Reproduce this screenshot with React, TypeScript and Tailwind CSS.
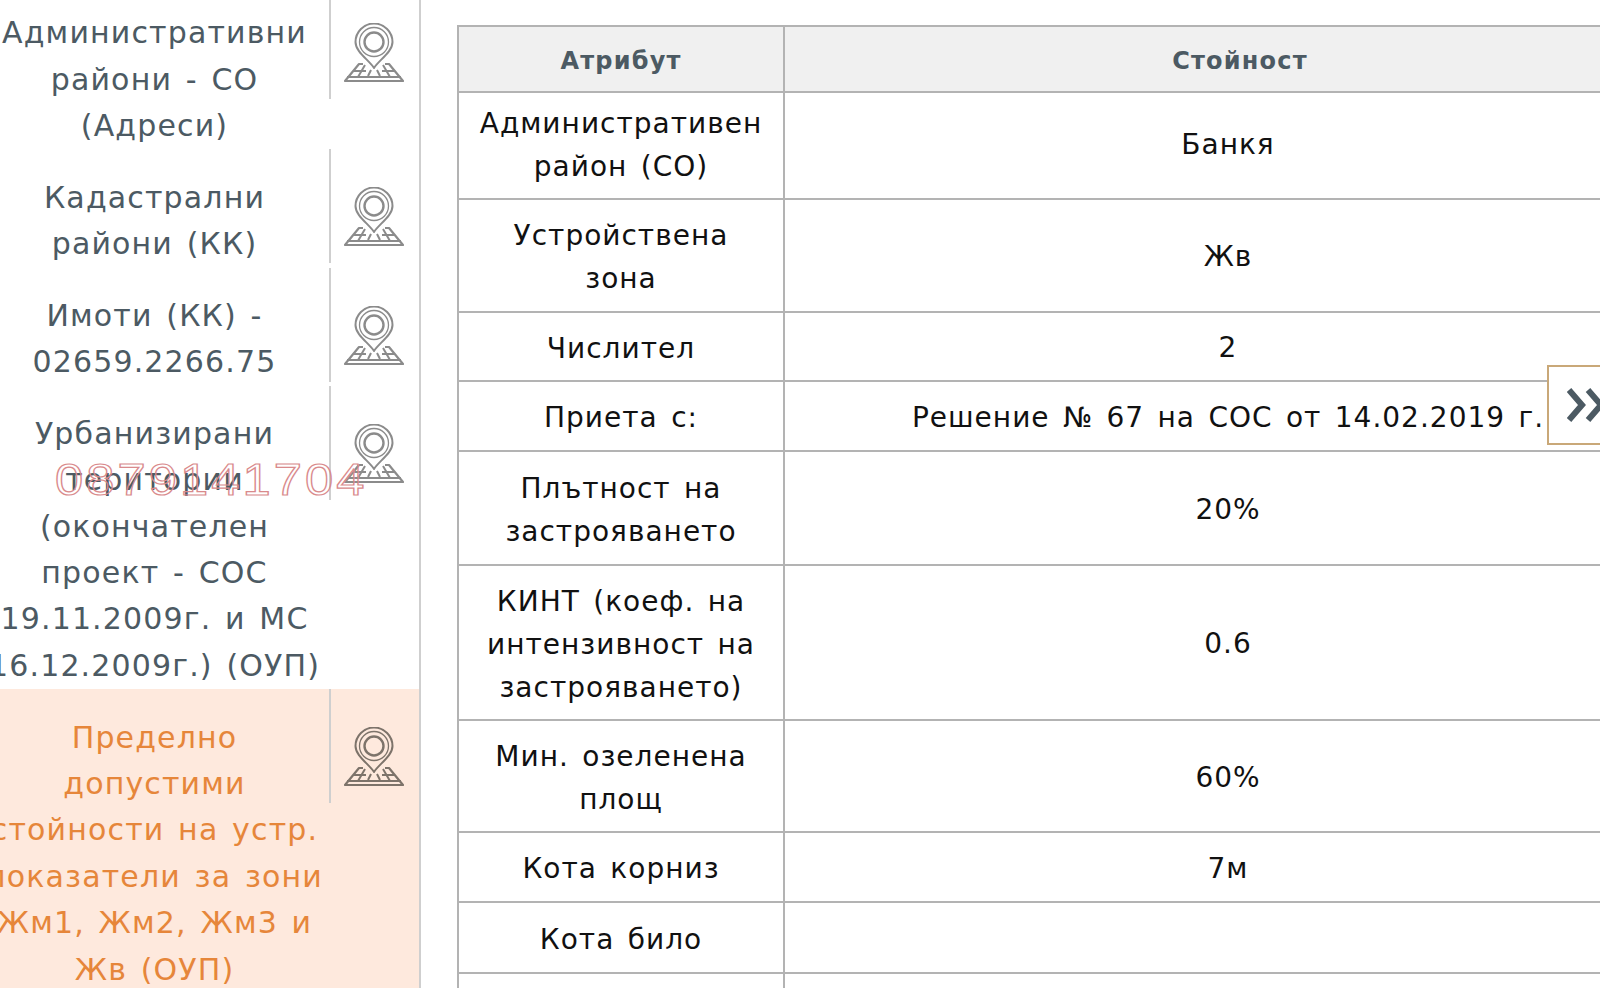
const sideItems = [
  { label: "Административни районите", lines: ["Административни", "райони - СО", "(Адреси)"] },
  { label: "Кадастрални", lines: ["Кадастрални", "райони (КК)"] },
  { label: "Имоти", lines: ["Имоти (КК) -", "02659.2266.75"] },
  {
    label: "Урбанизирани",
    lines: ["Урбанизирани", "територии", "(окончателен", "проект - СОС", "19.11.2009г. и МС", "16.12.2009г.) (ОУП)"],
  },
  {
    label: "Пределно",
    active: true,
    lines: ["Пределно", "допустими", "стойности на устр.", "показатели за зони", "Жм1, Жм2, Жм3 и", "Жв (ОУП)"],
  },
]

const rows = [
  { name: ["Административен", "район (СО)"], value: "Банкя", h: "h-[107px]", pad: "pb-[1px]" },
  { name: ["Устройствена", "зона"], value: "Жв", h: "h-[113px]", pad: "pt-[3px]" },
  { name: ["Числител"], value: "2", h: "h-[69px]", pad: "pt-[3px]" },
  { name: ["Приета с:"], value: "Решение № 67 на СОС от 14.02.2019 г.", h: "h-[70px]", pad: "pt-[3px]" },
  { name: ["Плътност на", "застрояването"], value: "20%", h: "h-[114px]", pad: "pt-[3px]" },
  { name: ["КИНТ (коеф. на", "интензивност на", "застрояването)"], value: "0.6", h: "h-[155px]", pad: "pt-[3px]" },
  { name: ["Мин. озеленена", "площ"], value: "60%", h: "h-[112px]", pad: "pt-[3px]" },
  { name: ["Кота корниз"], value: "7м", h: "h-[70px]", pad: "pt-[3px]" },
  { name: ["Кота било"], value: "", h: "h-[71px]", pad: "pt-[3px]" },
  { name: [""], value: "", h: "h-[70px]", pad: "pt-[3px]" },
]

const MapPinIcon = ({ color }: { color: string }) => (
  <svg width="60" height="60" viewBox="0 0 60 60" fill="none" stroke={color} strokeWidth="2" strokeLinejoin="round">
    <path d="M30 45 C25 37 11.500 29 11.500 19 A18.500 18.500 0 0 1 48.500 19 C48.500 29 35 37 30 45 Z" />
    <circle cx="30" cy="19" r="14.500" strokeWidth="1.300" />
    <circle cx="30" cy="19" r="9.500" strokeWidth="2.400" />
    <path d="M19 41 H15 L1 58 H59 L45 41 H41" strokeWidth="2.200" />
    <path d="M3 54 H57 M9 48 H22 M38 48 H51 M21 42 L14 54 M39 42 L46 54 M27 47 L24 53 M33 47 L36 53" strokeWidth="2" />
  </svg>
)

const SideRow = ({ item }: { item: (typeof sideItems)[number] }) => (
  <div className={`flex ${item.active ? "bg-[#fee9dd]" : "bg-white"}`}>
    <div
      className={`w-[351px] shrink-0 whitespace-nowrap pt-[25.25px] pl-[2px] text-center text-[30px] leading-[46.4px] tracking-[1.15px] [word-spacing:3px] ${
        item.active ? "text-[#e6863a]" : "text-[#4c5a63]"
      }`}
    >
      {item.lines.map((line) => (
        <div key={line} className="flex justify-center">
          {line}
        </div>
      ))}
    </div>
    <div className="flex h-[114px] w-[90px] shrink-0 items-start justify-center border-l-2 border-[#cfcfcf] pt-[38px] pr-[3px]">
      <MapPinIcon color={item.active ? "#7d736a" : "#8b8b8b"} />
    </div>
  </div>
)

export default function App() {
  return (
    <div className="relative flex h-[988px] w-[1600px] overflow-hidden bg-white font-['DejaVu_Sans',sans-serif]">
      <aside className="-mt-[15px] -ml-[22px] h-[1003px] w-[443px] shrink-0 border-r-2 border-[#cfcfcf]">
        {sideItems.map((item) => (
          <SideRow key={item.label} item={item} />
        ))}
      </aside>

      <main className="ml-[36px] pt-[25px]">
        <table className="w-[1240px] table-fixed border-collapse text-center text-[28px] tracking-[1px] text-[#111] [word-spacing:3.5px]">
          <thead>
            <tr className="h-[66px] bg-[#f0f0f0] text-[24px] tracking-[1.2px] text-[#4c5a63]">
              <th className="w-[326px] border-2 border-[#b3b3b3] pt-[4px] font-bold">Атрибут</th>
              <th className="border-2 border-[#b3b3b3] pt-[4px] font-bold">Стойност</th>
            </tr>
          </thead>
          <tbody>
            {rows.map((row, i) => (
              <tr key={i} className={row.h}>
                <td className={`border-2 border-[#b3b3b3] leading-[43px] ${row.pad}`}>
                  {row.name.map((line) => (
                    <div key={line}>{line}</div>
                  ))}
                </td>
                <td className={`border-2 border-[#b3b3b3] pr-[24px] ${row.pad}`}>{row.value}</td>
              </tr>
            ))}
          </tbody>
        </table>
      </main>

      {/* phone watermark over the sidebar */}
      <div className="absolute top-[455px] left-[55px] origin-left scale-x-[1.15] font-['Liberation_Sans',sans-serif] text-[44px] leading-[50px] tracking-[2.7px] text-transparent [-webkit-text-stroke:1.2px_#d98a8c]">
        0879141704
      </div>

      <div className="absolute top-[365px] left-[1547px] flex h-[80px] w-[60px] items-center border-2 border-[#c9a878] bg-white pl-[18px]">
        <svg width="36" height="36" viewBox="0 0 36 36" fill="none" stroke="#4c5a63" strokeWidth="6">
          <path d="M2 3 L15 18 L2 33" />
          <path d="M21 3 L34 18 L21 33" />
        </svg>
      </div>
    </div>
  )
}
